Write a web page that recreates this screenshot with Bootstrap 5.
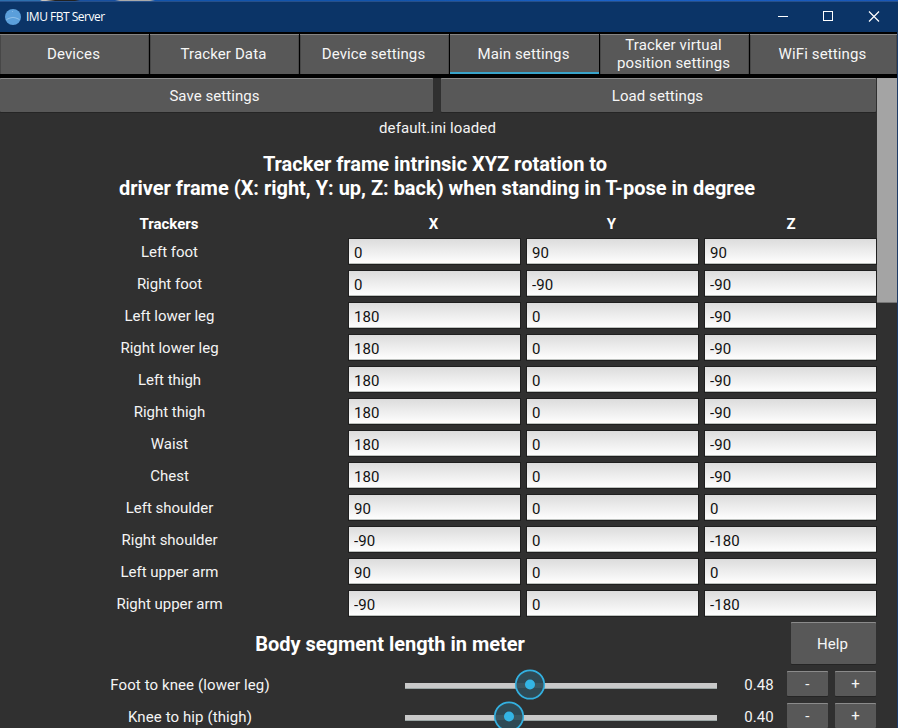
<!DOCTYPE html>
<html lang="en">
<head>
<meta charset="utf-8">
<title>IMU FBT Server</title>
<link href="https://cdn.jsdelivr.net/npm/bootstrap@5.3.0/dist/css/bootstrap.min.css" rel="stylesheet">
<style>
body{width:898px;height:728px;background:#303030;color:#f4f4f4;font:15px/18px Roboto,sans-serif;letter-spacing:.12px}
.desk-strip{height:1px;background:linear-gradient(90deg,#2d6fae 0 40px,#c8c4c0 42px 46px,#222 55px 75px,#1850a0 80px 115px,#aaa 120px 150px,#1254ac 155px 400px,#1b62c8 600px,#1857b8)}
.titlebar{height:31px;background:#0b3467;border-top:1px solid #27508a;font:12px/16px "Open Sans","Noto Sans",sans-serif;color:#fff;letter-spacing:-.5px;padding:0 1px 0 5px}
.apptitle{margin-left:5px}
.winbtn{width:46px;height:30px}
.client{height:696px;border-right:1px solid #1e3c68}
.tabs{height:46px;background:#000;padding:2px 0 4px;gap:1px}
.tabs .btn,.kbtn{background:#585858;color:#f6f6f6;border:0;border-radius:0;padding:0;font:inherit;letter-spacing:inherit;box-shadow:inset 0 1px #858585,inset 1px 0 #474747,inset -1px 0 #484848}
.tabs .btn{flex:0 0 149px;padding-right:2px}
.tabs .btn:last-child{flex:1 1 0}
.tabs .btn.active{background:#585858;color:#f6f6f6;box-shadow:inset 0 1px #858585,inset 0 -2px #39a4cb}
.kbtn{border-radius:1px;box-shadow:inset 0 1px #8b8b8b,0 1px #252525}
.kbtn:hover,.tabs .btn:hover{background:#636363;color:#fff}
.view{height:650px}
.pane{width:877px}
.filebar{height:34px;gap:8px;padding-right:1px}
.filebar .kbtn{padding:2px 2px 0 0;letter-spacing:.06px}
.filebar .save{width:433px;padding-right:4px}
.status{height:32px;padding-right:2px;letter-spacing:.1px}
.title{font-size:20px;line-height:24px;font-weight:700;letter-spacing:-.015px;color:#fff}
.rotation-title{padding-right:3px}
.body-title{padding:2px 11px 0 0}
.trackers{display:grid;grid-template-columns:340px 178px 178px 181px;text-align:center}
.trackers .head{height:24px;line-height:24px;font-weight:700;color:#fff;letter-spacing:0}
.trackers .head:first-child{padding-right:2px}
.trackers .hx{padding-left:9px}
.trackers .tname{height:32px;line-height:32px;letter-spacing:-.02px;padding-right:1px}
.trackers .cell{height:32px;padding:2px 0 2px 8px}
.field{display:block;height:27px;width:173px;border:1px solid #1f1f1f;border-radius:0;padding:3px 0 0 5px;background:linear-gradient(#dcdcdc,#fdfdfd 94%,#bdc1be 98%);color:#111;font:15px/20px Roboto,sans-serif;letter-spacing:.1px;outline:0}
.scrolltrack{width:20px}
.scrollthumb{height:225px;background:#a4a4a4;border-bottom:1px solid #777}
.bodyhead{padding:2px 1px 5px 0}
.help{width:85px;height:42px;padding:2px 2px 0 0}
.seg{height:32px}
.segname{width:380px;text-align:center;letter-spacing:.1px}
.track{width:312px;height:6px;background:#c9c9c9;border-bottom:1px solid #9aa5a4;margin:1px 0 0 25px;position:relative}
.track svg{position:absolute;top:-14px;transform:translateX(-50%);display:block}
.value{width:70px;padding-left:14px;text-align:center}
.step{width:41px;height:25px;margin-top:-4px;padding-top:2px}
.plus{margin-left:7px}
</style>
<script src="https://cdn.jsdelivr.net/npm/bootstrap@5.3.0/dist/js/bootstrap.bundle.min.js"></script>
</head>
<body class="overflow-hidden">
<div class="desk-strip"></div>
<header class="titlebar d-flex align-items-center">
  <svg width="16" height="16" viewBox="0 0 16 16"><circle cx="8" cy="8" r="8" fill="#5b9fdb"/><path d="M1.500 10.500 5 9q3-1.300 6 0l3.500 1.500" fill="none" stroke="#8fc0ea"/><circle cx="7.500" cy="2.500" r=".6" fill="#8fc0ea"/></svg>
  <span class="apptitle me-auto">IMU FBT Server</span>
  <svg class="winbtn" viewBox="0 0 46 30"><path d="M19 14.500h10" stroke="#fff"/></svg>
  <svg class="winbtn" viewBox="0 0 46 30"><rect x="18.500" y="9.500" width="9" height="9" fill="none" stroke="#fff"/></svg>
  <svg class="winbtn" viewBox="0 0 46 30"><path d="m18 9.500 10 10m0-10-10 10" stroke="#fff" stroke-width="1.200"/></svg>
</header>
<main class="client d-flex flex-column">
  <nav class="tabs d-flex">
    <button class="btn">Devices</button>
    <button class="btn">Tracker Data</button>
    <button class="btn">Device settings</button>
    <button class="btn active">Main settings</button>
    <button class="btn">Tracker virtual<br>position settings</button>
    <button class="btn">WiFi settings</button>
  </nav>
  <div class="view d-flex overflow-hidden">
    <div class="pane flex-shrink-0">
      <div class="filebar d-flex">
        <button class="btn kbtn save">Save settings</button>
        <button class="btn kbtn flex-fill">Load settings</button>
      </div>
      <div class="status d-flex align-items-center justify-content-center">default.ini loaded</div>
      <h1 class="title rotation-title text-center mt-2 mb-0"><span class="pe-1">Tracker frame intrinsic XYZ rotation to</span><br>driver frame (X: right, Y: up, Z: back) when standing in T-pose in degree</h1>
      <div class="trackers mt-2 pt-1" id="trackers">
        <div class="head">Trackers</div><div class="head hx">X</div><div class="head hx">Y</div><div class="head hx">Z</div>
      </div>
      <div class="bodyhead d-flex align-items-center">
        <h2 class="title body-title text-center flex-fill mb-0">Body segment length in meter</h2>
        <button class="btn kbtn help">Help</button>
      </div>
      <div id="segments"></div>
    </div>
    <div class="scrolltrack"><div class="scrollthumb"></div></div>
  </div>
</main>
<script>
const rotations = [
  ["Left foot", 0, 90, 90], ["Right foot", 0, -90, -90],
  ["Left lower leg", 180, 0, -90], ["Right lower leg", 180, 0, -90],
  ["Left thigh", 180, 0, -90], ["Right thigh", 180, 0, -90],
  ["Waist", 180, 0, -90], ["Chest", 180, 0, -90],
  ["Left shoulder", 90, 0, 0], ["Right shoulder", -90, 0, -180],
  ["Left upper arm", 90, 0, 0], ["Right upper arm", -90, 0, -180]
];
document.getElementById("trackers").insertAdjacentHTML("beforeend", rotations.map(([name, ...xyz]) =>
  `<div class="tname">${name}</div>` + xyz.map((v, i) =>
  `<div class="cell"><input class="field" aria-label="${name} ${"XYZ"[i]}" value="${v}"></div>`).join("")).join(""));
const segments = [["Foot to knee (lower leg)", "0.48", 124.5], ["Knee to hip (thigh)", "0.40", 103.5]];
document.getElementById("segments").innerHTML = segments.map(([name, v, x]) =>
  `<div class="seg d-flex align-items-center"><div class="segname">${name}</div>
   <div class="track"><svg style="left:${x}px" width="31" height="31" viewBox="0 0 31 31"><circle cx="15.500" cy="15.500" r="14.200" fill="#2f4a55" stroke="#33b0e0" stroke-width="1.800"/><path d="M2 14h27v5H2z" fill="#43616b" opacity=".6"/><circle cx="15.500" cy="15.500" r="5" fill="#33b5e5"/></svg></div>
   <div class="value">${v}</div><button class="btn kbtn step">-</button><button class="btn kbtn step plus">+</button></div>`).join("");
</script>
</body>
</html>
